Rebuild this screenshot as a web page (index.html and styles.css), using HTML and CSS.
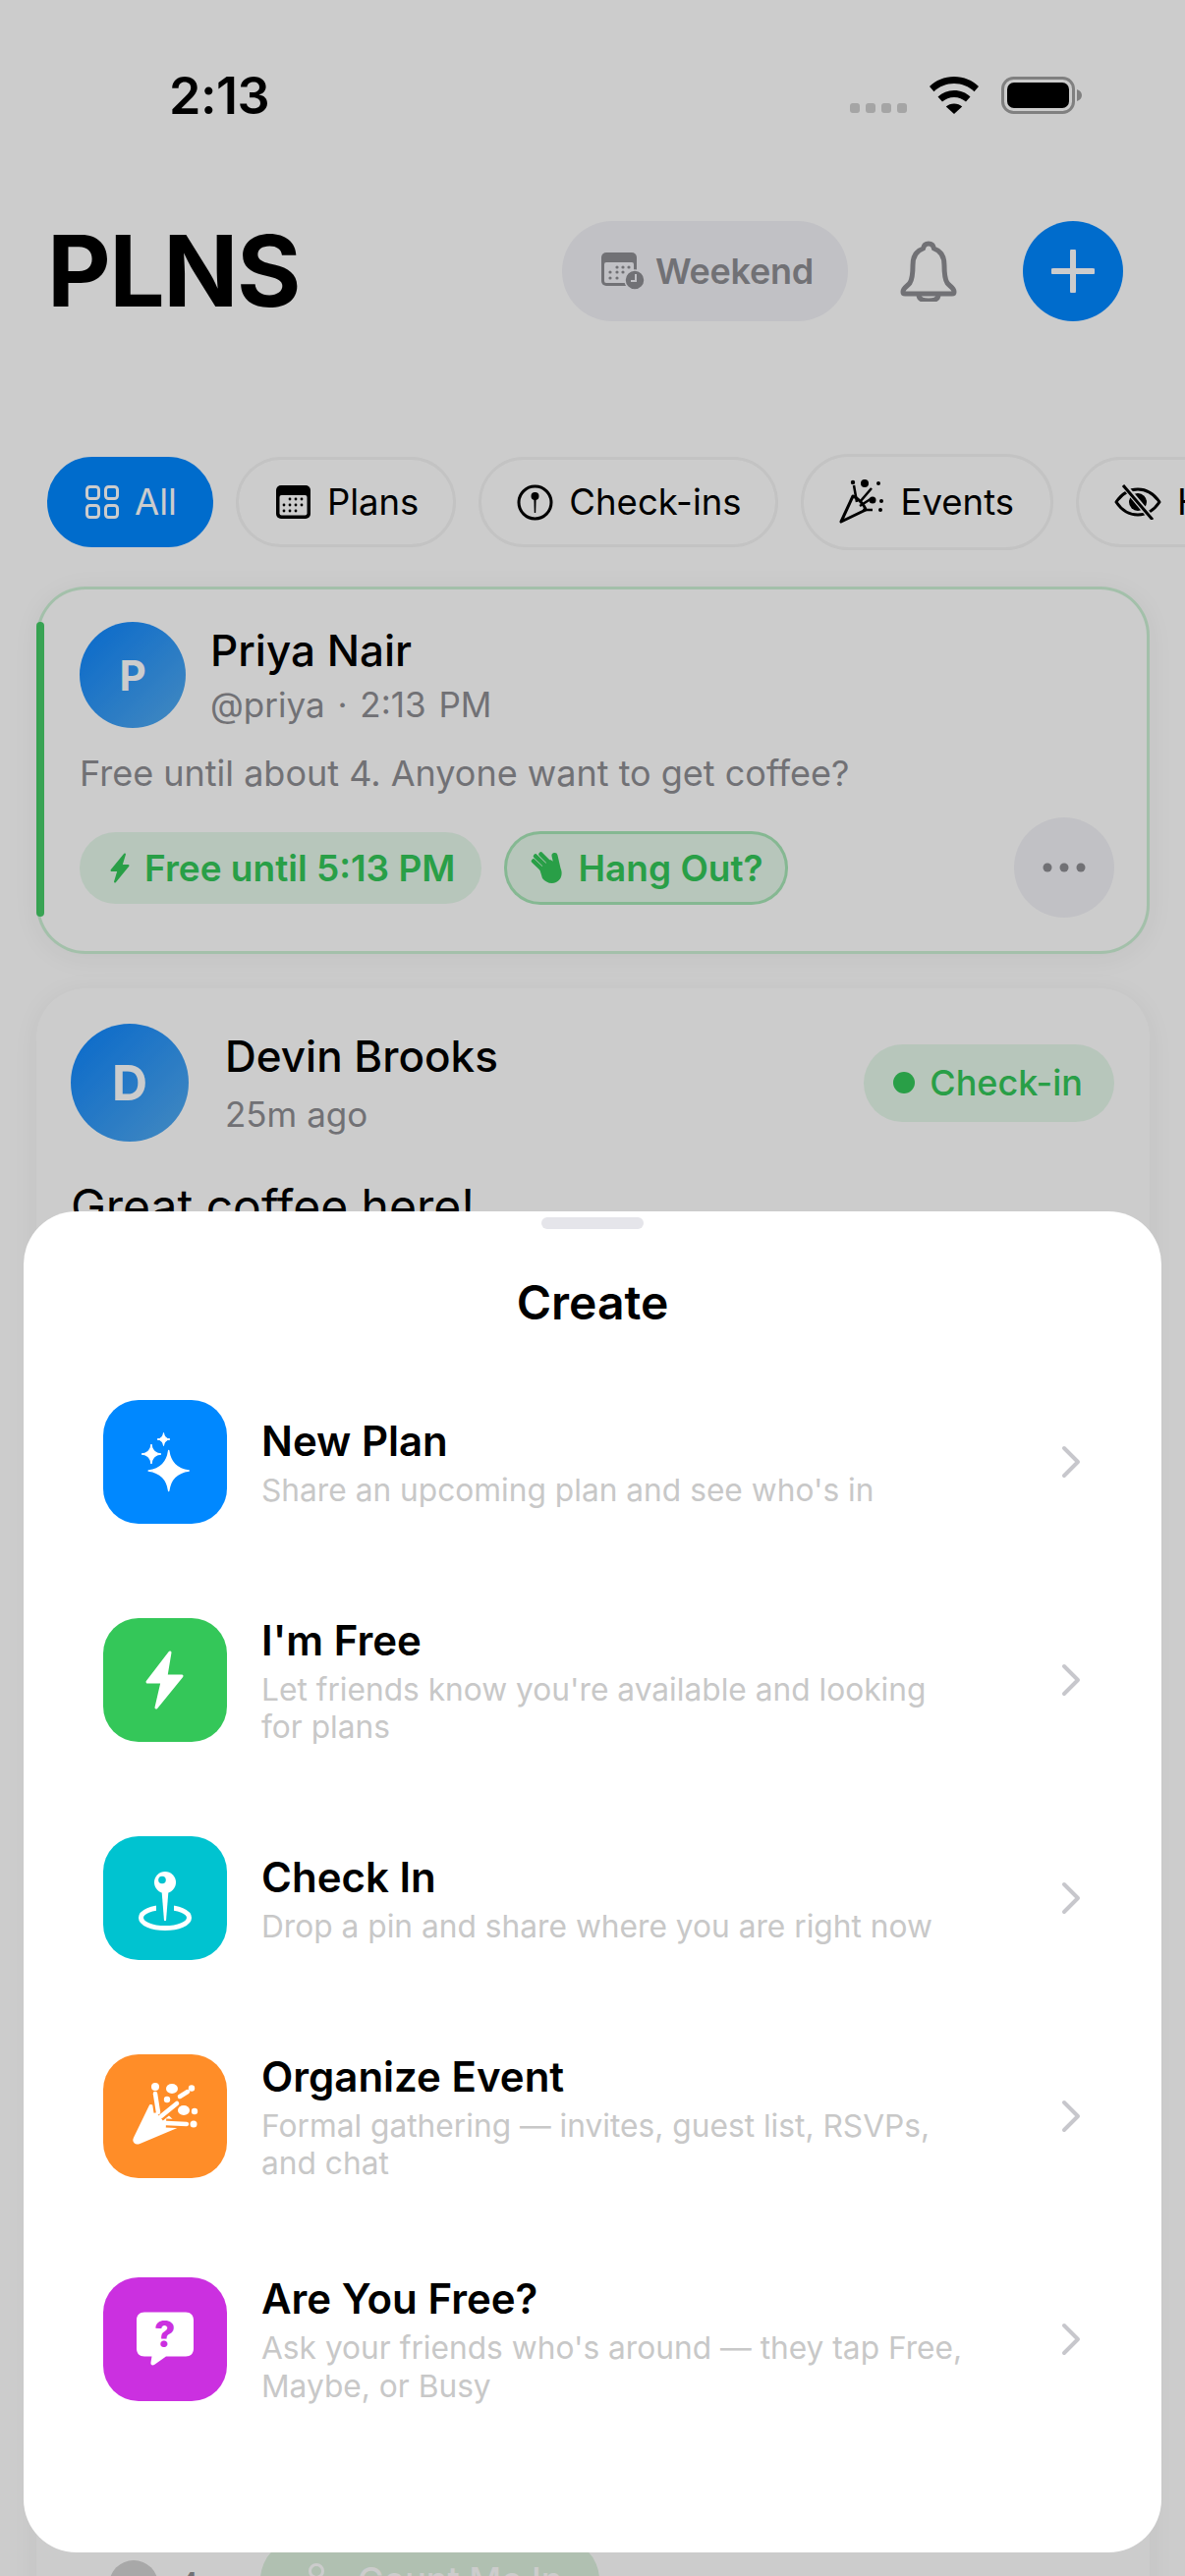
FILE: index.html
```html
<!DOCTYPE html>
<html lang="en">
<head>
<meta charset="utf-8">
<title>PLNS</title>
<link rel="stylesheet" href="styles.css">
</head>
<body>
<div class="app">
  <div class="status">
    <span class="time">2:13</span>
    <div class="status-icons">
      <svg class="cell" width="58" height="10" viewBox="0 0 58 10"><g fill="#cfcfcf"><rect width="10" height="10" rx="3"/><rect x="16" width="10" height="10" rx="3"/><rect x="32" width="10" height="10" rx="3"/><rect x="48" width="10" height="10" rx="3"/></g></svg>
      <svg class="wifi" width="52" height="38" viewBox="0 0 52 38"><path d="M26 0C16 0 7.500 3.800 1 10l4.500 5.200C11 10 18 7 26 7s15 3 20.500 8.200L51 10C44.500 3.800 36 0 26 0z"/><path d="M26 14c-6.500 0-12 2.400-16.500 6.400l4.500 5.200c3.200-2.900 7.400-4.600 12-4.600s8.800 1.700 12 4.600l4.500-5.200C38 16.400 32.500 14 26 14z"/><path d="M26 27.500c-3.200 0-6 1.100-8.200 3L26 38l8.200-7.500c-2.200-1.900-5-3-8.200-3z"/></svg>
      <svg class="battery" width="83" height="38" viewBox="0 0 83 38"><rect x="1.500" y="1.500" width="72" height="35" rx="11" fill="none" stroke="#a0a0a0" stroke-width="3"/><rect x="6" y="6" width="63" height="26" rx="7"/><path d="M77 13c3 1 5 3 5 6s-2 5-5 6z" fill="#a0a0a0"/></svg>
    </div>
  </div>

  <header class="topbar">
    <h1 class="brand">PLNS</h1>
    <div class="range">
      <svg width="44" height="38" viewBox="0 0 44 38"><rect width="36" height="34" rx="5" fill="#8e8e93"/><rect x="3" y="10" width="30" height="21" rx="2" fill="#f2f2f7"/><g fill="#8e8e93"><circle cx="16" cy="15" r="1.600"/><circle cx="22" cy="15" r="1.600"/><circle cx="28" cy="15" r="1.600"/><circle cx="9" cy="20" r="1.600"/><circle cx="16" cy="20" r="1.600"/><circle cx="22" cy="20" r="1.600"/><circle cx="9" cy="26" r="1.600"/><circle cx="16" cy="26" r="1.600"/></g><circle cx="34" cy="28" r="10" fill="#8e8e93" stroke="#f2f2f7" stroke-width="1.500"/><path d="M35 22v7h-5" fill="none" stroke="#f2f2f7" stroke-width="2"/></svg>
      <span>Weekend</span>
    </div>
    <svg class="bell" width="58" height="62" viewBox="0 0 58 62"><path d="M29 3c-3 0-5 2-5.500 5C16 10.500 13 17 13 25c0 8-.5 14-3 18-2 3-7 5-7 9 0 1 .5 2 2 2h48c1.500 0 2-1 2-2 0-4-5-6-7-9-2.500-4-3-10-3-18 0-8-3-14.500-10.500-17C34 5 32 3 29 3z" fill="none" stroke="#8e8e93" stroke-width="5" stroke-linejoin="round"/><path d="M19 55c0 4 4 6 10 6s10-2 10-6" fill="none" stroke="#8e8e93" stroke-width="5"/></svg>
    <button class="add" type="button"><svg width="44" height="44" viewBox="0 0 44 44"><path d="M22 2v40M2 22h40" stroke="#fff" stroke-width="6" stroke-linecap="round"/></svg></button>
  </header>

  <nav class="filters">
    <div class="chip chip-on">
      <svg width="34" height="34" viewBox="0 0 34 34" fill="none" stroke="#fff" stroke-width="3"><rect x="1.500" y="1.500" width="12" height="12" rx="3"/><rect x="20.500" y="1.500" width="12" height="12" rx="3"/><rect x="1.500" y="20.500" width="12" height="12" rx="3"/><rect x="20.500" y="20.500" width="12" height="12" rx="3"/></svg>
      <span>All</span>
    </div>
    <div class="chip chip-plans">
      <svg width="35" height="34" viewBox="0 0 35 34"><rect width="35" height="34" rx="5"/><rect x="3.500" y="10" width="28" height="20.500" rx="2" fill="#fff"/><g><circle cx="14" cy="14" r="1.400"/><circle cx="20" cy="14" r="1.400"/><circle cx="26" cy="14" r="1.400"/><circle cx="8" cy="20" r="1.400"/><circle cx="14" cy="20" r="1.400"/><circle cx="20" cy="20" r="1.400"/><circle cx="26" cy="20" r="1.400"/><circle cx="8" cy="26" r="1.400"/><circle cx="14" cy="26" r="1.400"/><circle cx="20" cy="26" r="1.400"/></g></svg>
      <span>Plans</span>
    </div>
    <div class="chip">
      <svg width="37" height="37" viewBox="0 0 37 37"><circle cx="18.500" cy="18.500" r="16.500" fill="none" stroke="#000" stroke-width="3"/><circle cx="18.500" cy="12" r="4"/><path d="M17.300 12h2.400l-.5 17h-1.400z"/></svg>
      <span>Check-ins</span>
    </div>
    <div class="chip chip-tall">
      <svg width="46" height="46" viewBox="0 0 46 46"><path d="M2 43L14 17c4 1 12 9 13 14z" fill="none" stroke="#000" stroke-width="3" stroke-linejoin="round"/><path d="M15 6l3 17M33 9l-12 14M21 27l11-7M24 31l10 0" stroke="#000" stroke-width="2.500" fill="none"/><circle cx="14" cy="3" r="2.200"/><circle cx="26" cy="4" r="4"/><circle cx="40" cy="4" r="2"/><circle cx="34" cy="21" r="3.500"/><circle cx="43" cy="22" r="2"/><circle cx="42" cy="31" r="2"/></svg>
      <span>Events</span>
    </div>
    <div class="chip">
      <svg width="48" height="36" viewBox="0 0 48 36"><path d="M2 18C8 9 15 5 24 5s16 4 22 13c-6 9-13 13-22 13S8 27 2 18z" fill="none" stroke="#000" stroke-width="3" stroke-linejoin="round"/><circle cx="24" cy="18" r="9"/><path d="M9 0l30 36" stroke="#fff" stroke-width="6"/><path d="M9 1l30 35" stroke="#000" stroke-width="3"/></svg>
      <span>Hidden</span>
    </div>
  </nav>

  <main class="feed">
    <article class="card card-free">
      <span class="accent"></span>
      <div class="person">
        <div class="avatar">P</div>
        <div class="who">
          <div class="name">Priya Nair</div>
          <div class="meta meta-handle">@priya · 2:13 PM</div>
        </div>
      </div>
      <p class="note">Free until about 4. Anyone want to get coffee?</p>
      <div class="actions">
        <span class="tag">
          <svg width="20" height="31" viewBox="0 0 20 31"><path d="M15 1.500L1.500 18H8.500L5 29.500 18.500 13H11.500z" fill="#34c759" stroke="#34c759" stroke-width="2" stroke-linejoin="round"/></svg>
          Free until 5:13 PM
        </span>
        <span class="tag tag-line">
          <svg width="33" height="33" viewBox="0 0 33 33"><g stroke="#34c759" stroke-linecap="round" fill="none"><path d="M3 9.500L15 21" stroke-width="4.500"/><path d="M5 4.500L18 17" stroke-width="4.500"/><path d="M10.500 2.500L23 15" stroke-width="4.500"/><path d="M24.500 4L27.500 17" stroke-width="6"/></g><path d="M9 17L20 8 27 12 31 18C33 24 30 29 26 31 21 33.500 15 31 12 27z" fill="#34c759"/></svg>
          Hang Out?
        </span>
        <button class="more" type="button"><svg width="44" height="10" viewBox="0 0 44 10"><g fill="#8e8e93"><circle cx="5" cy="5" r="4.500"/><circle cx="22" cy="5" r="4.500"/><circle cx="39" cy="5" r="4.500"/></g></svg></button>
      </div>
    </article>

    <article class="card card-post">
      <div class="post-head">
        <div class="avatar avatar-lg">D</div>
        <div class="who who-lg">
          <div class="name">Devin Brooks</div>
          <div class="meta">25m ago</div>
        </div>
        <span class="tag tag-status"><i class="dot"></i>Check-in</span>
      </div>
      <p class="post-text">Great coffee here!</p>
      <div class="post-media"></div>
      <div class="post-foot">
        <span class="mini-avatar"></span>
        <span class="count">4</span>
        <span class="join">
          <svg width="16" height="36" viewBox="0 0 16 36"><circle cx="8" cy="9" r="6.500" fill="none" stroke="#fff" stroke-width="3"/><path d="M8 15v20" stroke="#fff" stroke-width="3"/></svg>
          Count Me In
        </span>
        <svg class="foot-more" width="40" height="8" viewBox="0 0 40 8"><g fill="#8e8e93"><circle cx="4" cy="4" r="4"/><circle cx="20" cy="4" r="4"/><circle cx="36" cy="4" r="4"/></g></svg>
      </div>
    </article>
  </main>

  <div class="scrim"></div>

  <section class="sheet">
    <span class="grip"></span>
    <h2 class="sheet-title">Create</h2>
    <ul class="menu">
      <li class="row">
        <span class="tile tile-blue"><svg width="126" height="126" viewBox="0 0 126 126" fill="#fff"><path d="M66.700 51.500Q69 69.500 87.200 72 69 74.500 66.700 92.500 64.400 74.500 46.200 72 64.400 69.500 66.700 51.500z" stroke="#fff" stroke-width="1.500" stroke-linejoin="round"/><path d="M49 45Q50 54 59 55 50 56 49 65 48 56 39 55 48 54 49 45z" stroke="#fff" stroke-linejoin="round"/><path d="M61.500 33.500Q62.200 39.300 68 40 62.200 40.700 61.500 46.500 60.800 40.700 55 40 60.800 39.300 61.500 33.500z" stroke="#fff" stroke-linejoin="round"/></svg></span>
        <div class="row-text">
          <div class="row-title">New Plan</div>
          <div class="row-desc">Share an upcoming plan and see who's in</div>
        </div>
        <svg class="chev" width="20" height="34" viewBox="0 0 20 34"><path d="M3 3l14 14L3 31" fill="none" stroke="#c7c7cc" stroke-width="4" stroke-linecap="round" stroke-linejoin="round"/></svg>
      </li>
      <li class="row">
        <span class="tile tile-green"><svg width="126" height="126" viewBox="0 0 126 126"><path d="M68 35L45 65H60L54 91 80 59H64z" fill="#fff" stroke="#fff" stroke-width="3" stroke-linejoin="round"/></svg></span>
        <div class="row-text">
          <div class="row-title">I'm Free</div>
          <div class="row-desc">Let friends know you're available and looking for plans</div>
        </div>
        <svg class="chev" width="20" height="34" viewBox="0 0 20 34"><path d="M3 3l14 14L3 31" fill="none" stroke="#c7c7cc" stroke-width="4" stroke-linecap="round" stroke-linejoin="round"/></svg>
      </li>
      <li class="row">
        <span class="tile tile-cyan"><svg width="126" height="126" viewBox="0 0 126 126"><ellipse cx="63" cy="83" rx="24.500" ry="10.500" fill="none" stroke="#fff" stroke-width="5"/><path d="M54 62h18v14H54z" fill="#00c3d0"/><path d="M59.500 55h7L64 86h-2z" fill="#fff"/><circle cx="63" cy="47" r="11" fill="#fff"/><circle cx="60" cy="44.500" r="3.800" fill="#00c3d0"/></svg></span>
        <div class="row-text">
          <div class="row-title">Check In</div>
          <div class="row-desc">Drop a pin and share where you are right now</div>
        </div>
        <svg class="chev" width="20" height="34" viewBox="0 0 20 34"><path d="M3 3l14 14L3 31" fill="none" stroke="#c7c7cc" stroke-width="4" stroke-linecap="round" stroke-linejoin="round"/></svg>
      </li>
      <li class="row">
        <span class="tile tile-orange"><svg width="126" height="126" viewBox="0 0 126 126" fill="#fff"><path d="M48 52c6 0 24 14 27 22L37 90c-4 1.500-7-1-5-5z" stroke="#fff" stroke-width="2" stroke-linejoin="round"/><g fill="none" stroke="#fff" stroke-width="4.500" stroke-linecap="round"><path d="M78 43l8-5"/></g><g fill="none" stroke="#ff8d28" stroke-width="9"><path d="M53 40l3 19"/><path d="M75 50L58 64"/><path d="M64 70l21 1"/></g><g fill="none" stroke="#fff" stroke-width="4.500" stroke-linecap="round"><path d="M53 40l3 19"/><path d="M75 50L59 63"/><path d="M64 70l21 1"/></g><circle cx="53" cy="33" r="4"/><ellipse cx="70" cy="35" rx="6" ry="5"/><circle cx="90" cy="34.500" r="3.200"/><circle cx="65" cy="46" r="3.200"/><ellipse cx="82" cy="57" rx="6" ry="5"/><circle cx="93" cy="58" r="3.200"/><circle cx="92" cy="71" r="3.500"/></svg></span>
        <div class="row-text">
          <div class="row-title">Organize Event</div>
          <div class="row-desc">Formal gathering — invites, guest list, RSVPs, and chat</div>
        </div>
        <svg class="chev" width="20" height="34" viewBox="0 0 20 34"><path d="M3 3l14 14L3 31" fill="none" stroke="#c7c7cc" stroke-width="4" stroke-linecap="round" stroke-linejoin="round"/></svg>
      </li>
      <li class="row">
        <span class="tile tile-purple"><svg width="126" height="126" viewBox="0 0 126 126"><path d="M42 35.500h42c5 0 8 3 8 8v29c0 5-3 8-8 8H64L52 89c-2 1-4 0-3.500-2.500l1-6H42c-5 0-8-3-8-8v-29c0-5 3-8 8-8z" fill="#fff"/><text x="62.700" y="71" text-anchor="middle" class="q">?</text></svg></span>
        <div class="row-text">
          <div class="row-title">Are You Free?</div>
          <div class="row-desc">Ask your friends who's around — they tap Free, Maybe, or Busy</div>
        </div>
        <svg class="chev" width="20" height="34" viewBox="0 0 20 34"><path d="M3 3l14 14L3 31" fill="none" stroke="#c7c7cc" stroke-width="4" stroke-linecap="round" stroke-linejoin="round"/></svg>
      </li>
    </ul>
  </section>
</div>
</body>
</html>
```

FILE: styles.css
```css
* { box-sizing: border-box; }
html, body { margin: 0; padding: 0; }
body { background: #fff; font-family: Inter, "Noto Sans", sans-serif; color: #000; }
.app { position: relative; width: 1206px; height: 2622px; overflow: hidden; background: #fff; }

.status { height: 194px; padding: 0 111px 0 172px; display: flex; align-items: center; justify-content: space-between; }
.time { font-size: 52px; font-weight: 600; letter-spacing: -.5px; }
.status-icons { display: flex; align-items: center; }
.cell { margin-top: 26px; margin-right: 22px; }
.wifi { margin-right: 22px; }
.battery { margin-right: -7px; }

.topbar { margin-top: 31px; padding: 0 63px 0 48px; height: 102px; display: flex; align-items: center; }
.brand { flex: 1; margin: 0; font-size: 100px; font-weight: 700; letter-spacing: -1.500px; line-height: 102px; }
.range { width: 291px; height: 102px; border-radius: 51px; background: #f2f2f7; display: flex; align-items: center; gap: 11px; padding-left: 40px; color: #8e8e93; font-size: 36px; font-weight: 600; letter-spacing: -.3px; }
.bell { margin: 0 67px 0 53px; }
.add { width: 102px; height: 102px; padding: 0; border: 0; border-radius: 50%; background: #0088ff; display: flex; align-items: center; justify-content: center; }

.filters { margin-top: 135px; height: 98px; padding-left: 48px; display: flex; align-items: center; gap: 23px; white-space: nowrap; }
.chip { flex: none; height: 92px; padding: 0 34px 0 36px; border: 3px solid #f4f4f4; border-radius: 46px; display: flex; align-items: center; gap: 16px; font-size: 36.500px; font-weight: 400; }
.chip-on { background: #0088ff; border-color: #0088ff; color: #fff; }
.chip-plans { padding: 0 35px 0 38px; gap: 17px; }
.chip-tall { height: 98px; border-radius: 49px; padding-right: 37px; gap: 17px; }

.feed { margin: 37px 36px 0 37px; display: flex; flex-direction: column; gap: 35px; }
.card { position: relative; background: #fff; border-radius: 50px; box-shadow: 0 4px 28px rgba(0,0,0,.05); }
.card-free { height: 374px; padding: 33px 33px 0 41px; border: 3px solid rgba(52,199,89,.25); }
.accent { position: absolute; left: -3px; top: 33px; width: 8px; height: 300px; border-radius: 4px; background: #34c759; opacity: .9; }
.person { display: flex; gap: 25px; }
.avatar { flex: none; width: 108px; height: 108px; border-radius: 50%; background: linear-gradient(135deg, #0a84ff, #55acf0); color: #fff; font-size: 42px; font-weight: 700; display: flex; align-items: center; justify-content: center; }
.who { display: flex; flex-direction: column; gap: 6px; padding-top: 2px; }
.name { font-size: 44px; font-weight: 500; line-height: 54px; }
.meta { font-size: 35px; line-height: 44px; color: #8e8e93; }
.meta-handle { word-spacing: 3px; }
.note { margin: 24px 0 23px; font-size: 36px; line-height: 44px; color: #8e8e93; }
.actions { display: flex; align-items: center; gap: 23px; }
.tag { height: 73px; padding: 0 27px 0 31px; border-radius: 37px; background: rgba(52,199,89,.13); color: #34c759; font-size: 37px; font-weight: 600; display: flex; align-items: center; gap: 15px; white-space: nowrap; }
.tag-line { height: 75px; padding: 0 22px 0 24px; border: 3px solid rgba(52,199,89,.35); }
.more { margin-left: auto; width: 102px; height: 102px; padding: 0; border: 0; border-radius: 50%; background: #f2f2f7; display: flex; align-items: center; justify-content: center; }

.card-post { padding: 36px 36px 0 35px; height: 1700px; }
.post-head { display: flex; align-items: center; }
.avatar-lg { width: 120px; height: 120px; font-size: 50px; }
.who-lg { flex: 1; margin-left: 37px; gap: 10px; padding-top: 0; }
.tag-status { height: 79px; border-radius: 40px; padding: 0 32px 0 30px; gap: 15px; font-weight: 500; font-size: 36px; }
.dot { width: 22px; height: 22px; border-radius: 50%; background: #34c759; }
.post-text { margin: 39px 0 0; font-size: 48px; line-height: 54px; }
.post-media { height: 1329px; }
.post-foot { display: flex; align-items: center; height: 84px; margin-left: 39px; }
.mini-avatar { width: 50px; height: 50px; border-radius: 50%; background: #d2d2d2; margin-top: 10px; }
.count { margin: 10px 0 0 19px; width: 85px; font-size: 36px; color: #8e8e93; }
.join { width: 345px; height: 84px; border-radius: 42px; background: #dcf0de; color: #fff; font-size: 36px; font-weight: 500; display: flex; align-items: center; gap: 34px; padding-left: 49px; }
.foot-more { margin-left: auto; margin-right: 44px; }

.scrim { position: absolute; inset: 0; background: rgba(0,0,0,.2); }

.sheet { position: absolute; left: 24px; top: 1233px; width: 1158px; height: 1365px; border-radius: 54px; background: #fff; display: flex; flex-direction: column; }
.grip { align-self: center; width: 104px; height: 12px; margin-top: 6px; border-radius: 6px; background: #e5e5ea; }
.sheet-title { margin: 40px 0 0; text-align: center; font-size: 48px; font-weight: 600; line-height: 70px; }
.menu { list-style: none; margin: 18.250px 0 0; padding: 0; }
.row { display: flex; align-items: center; padding: 45.750px 82px 45.750px 81px; }
.tile { flex: none; width: 126px; height: 126px; border-radius: 36px; display: block; }
.tile svg { display: block; }
.tile-blue { background: #0088ff; }
.tile-green { background: #34c759; }
.tile-cyan { background: #00c3d0; }
.tile-orange { background: #ff8d28; }
.tile-purple { background: #cb30e0; }
.row-text { flex: 1; margin-left: 35px; padding: 3px 91px 0 0; }
.row-title { font-size: 42px; font-weight: 560; line-height: 48px; }
.row-desc { margin-top: 7px; font-size: 31.700px; line-height: 38.500px; color: #c8c8c8; }
.chev { flex: none; }
.q { font-family: Inter, sans-serif; font-size: 37px; font-weight: 800; fill: #cb30e0; }
```
